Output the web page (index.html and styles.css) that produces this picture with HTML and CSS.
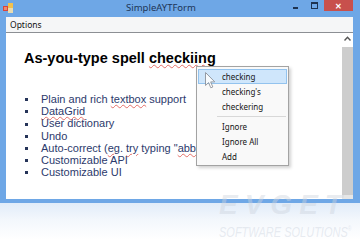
FILE: index.html
```
<!DOCTYPE html>
<html lang="en">
<head>
  <meta charset="UTF-8" />
  <title>SimpleAYTForm</title>
  <link rel="stylesheet" href="styles.css">
</head>
<body>
  <!-- Window -->
  <div class="window">
    <div class="titlebar">
      <svg class="app-icon" width="11" height="10" viewBox="0 0 11 10">
        <rect x="0" y="3" width="5" height="5" fill="#d8453c"/>
        <rect x="5" y="0" width="5" height="5" fill="#f2c14e"/>
        <rect x="5" y="5" width="5" height="5" fill="#e9dcb0"/>
        <rect x="1" y="4" width="3" height="3" fill="#f08a6e"/>
      </svg>
      <div class="title">SimpleAYTForm</div>
      <div class="controls">
        <span class="ctl-min"><i></i></span>
        <span class="ctl-max"><i></i></span>
        <span class="ctl-close">&#x2715;</span>
      </div>
    </div>

    <div class="frame">
      <div class="menubar"><span>Options</span></div>
      <div class="client">
        <div class="doc">
          <h1>As-you-type spell <span class="typo">checkiing</span></h1>
          <ul class="features">
            <li>Plain and rich <span class="typo">textbox</span> support</li>
            <li><span class="typo">DataGrid</span></li>
            <li>User dictionary</li>
            <li>Undo</li>
            <li>Auto-correct (<span class="typo">eg</span>. <span class="typo">try</span> typing "<span class="typo">abbout</span>")</li>
            <li>Customizable API</li>
            <li>Customizable UI</li>
          </ul>
        </div>
        <div class="scrollbar">
          <div class="sb-up">
            <svg width="7" height="5" viewBox="0 0 7 5"><path d="M0.5 4.5 L3.5 1.2 L6.5 4.5" fill="none" stroke="#555" stroke-width="1.4"/></svg>
          </div>
          <div class="sb-thumb"></div>
          <div class="sb-down"></div>
        </div>
      </div>
    </div>
  </div>

  <div class="reflection"></div>

  <!-- Context menu -->
  <div class="ctx-menu">
    <div class="ctx-item active">checking</div>
    <div class="ctx-item">checking's</div>
    <div class="ctx-item">checkering</div>
    <div class="ctx-sep"></div>
    <div class="ctx-item">Ignore</div>
    <div class="ctx-item">Ignore All</div>
    <div class="ctx-item">Add</div>
  </div>

  <svg class="cursor" width="11" height="17" viewBox="0 0 11 17">
    <path d="M0.5 0.5 L0.5 13.5 L3.6 10.6 L5.8 15.8 L7.8 15 L5.7 9.9 L9.8 9.9 Z" fill="#fff" stroke="#8a8f96" stroke-width="1"/>
  </svg>

  <div class="watermark">
    <div class="wm-big">EVGET</div>
    <div class="wm-small">SOFTWARE SOLUTIONS<sup>&reg;</sup></div>
  </div>
</body>
</html>
```

FILE: styles.css
```
body {
  margin: 0;
  width: 360px;
  height: 240px;
  overflow: hidden;
  background: #fff;
  font-family: "Noto Sans", "Open Sans", sans-serif;
  position: relative;
}

.window {
  background: #6ea7e6;
  height: 203px;
  display: flex;
  flex-direction: column;
}

/* Title bar */
.titlebar {
  height: 17px;
  display: flex;
  align-items: flex-start;
  flex-shrink: 0;
}
.app-icon { margin: 3px 0 0 3px; }
.title {
  flex: 1;
  text-align: center;
  font-size: 9.5px;
  line-height: 15px;
  color: #1d3557;
  padding-left: 22px;
}
.controls { display: flex; margin-right: 7px; }
.ctl-min, .ctl-max { width: 19px; height: 11px; display: flex; justify-content: center; }
.ctl-min i { display: block; width: 5px; height: 2px; background: #1e3350; margin-top: 7px; }
.ctl-max i { display: block; width: 5px; height: 4px; border: 1px solid #1e3350; border-top-width: 2px; margin-top: 2px; }
.ctl-close {
  width: 29px;
  height: 11px;
  background: #c8504c;
  color: #fff;
  font-size: 8px;
  line-height: 11px;
  text-align: center;
  font-weight: bold;
}

.frame {
  flex: 1;
  margin: 0 7px 4px 6px;
  display: flex;
  flex-direction: column;
}

.menubar {
  height: 15px;
  background: #f5f6f7;
  font-size: 8.5px;
  line-height: 15px;
  color: #111;
  padding-left: 4px;
}

.client {
  flex: 1;
  background: #fff;
  border-top: 1px solid #8c8f94;
  display: flex;
  overflow: hidden;
}

.doc {
  flex: 1;
  padding-left: 18px;
  font-family: "Liberation Sans", Arial, sans-serif;
  white-space: nowrap;
  overflow: hidden;
}

h1 {
  margin: 17px 0 0;
  font-size: 14.5px;
  line-height: 17px;
  font-weight: bold;
  color: #000;
}

.typo {
  text-decoration: underline wavy rgba(220, 70, 60, 0.75);
  text-decoration-thickness: 1px;
  text-underline-offset: 1px;
}

.features {
  list-style: none;
  margin: 26px 0 0;
  padding: 0;
  font-size: 11px;
  line-height: 12.2px;
  color: #2c3a6c;
}
.features li::before {
  content: "";
  display: inline-block;
  vertical-align: middle;
  width: 3px;
  height: 3px;
  background: #263459;
  margin: 0 13px 1px 1px;
}

.scrollbar {
  width: 11px;
  display: flex;
  flex-direction: column;
  background: #f0f0f0;
}
.sb-up { height: 14px; background: #fff; display: flex; justify-content: center; padding-top: 3px; box-sizing: border-box; }
.sb-thumb { flex: 1; background: #cdcdcd; }
.sb-down { height: 4px; background: #e6e6e6; }

.reflection {
  height: 37px;
  background: linear-gradient(#e1ecf9, #f3f7fc 45%, #fff);
}

/* Context menu */
.ctx-menu {
  position: absolute;
  left: 196px;
  top: 66px;
  width: 91px;
  padding: 2px 0 1px;
  background: #f9f9f9;
  border: 1px solid #a3a3a3;
  box-shadow: 2px 2px 3px rgba(0, 0, 0, 0.18);
  font-size: 8px;
  color: #151515;
}
.ctx-item {
  height: 15px;
  line-height: 15px;
  padding-left: 24px;
  margin: 0 1px;
  box-sizing: border-box;
}
.ctx-item.active {
  background: #cfe6fb;
  border: 1px solid #93c3ee;
  line-height: 13px;
  padding-left: 23px;
}
.ctx-sep {
  height: 5px;
  margin-left: 20px;
  margin-right: 2px;
  background: linear-gradient(transparent 2px, #d8d8d8 2px, #d8d8d8 3px, transparent 3px);
}

.cursor {
  position: absolute;
  left: 205px;
  top: 72px;
  opacity: 0.85;
}

/* Watermark */
.watermark {
  position: absolute;
  left: 219px;
  top: 191px;
  width: 135px;
  color: rgba(205, 212, 222, 0.45);
  font-family: "Liberation Sans", Arial, sans-serif;
  pointer-events: none;
}
.wm-big {
  font-size: 28px;
  font-weight: bold;
  font-style: italic;
  letter-spacing: 7px;
  line-height: 28px;
}
.wm-small {
  font-size: 11px;
  font-style: italic;
  line-height: 11px;
  margin-top: 2px;
  white-space: nowrap;
  transform: scaleY(1.4);
  transform-origin: top;
}
.wm-small sup { font-size: 5px; }
```
